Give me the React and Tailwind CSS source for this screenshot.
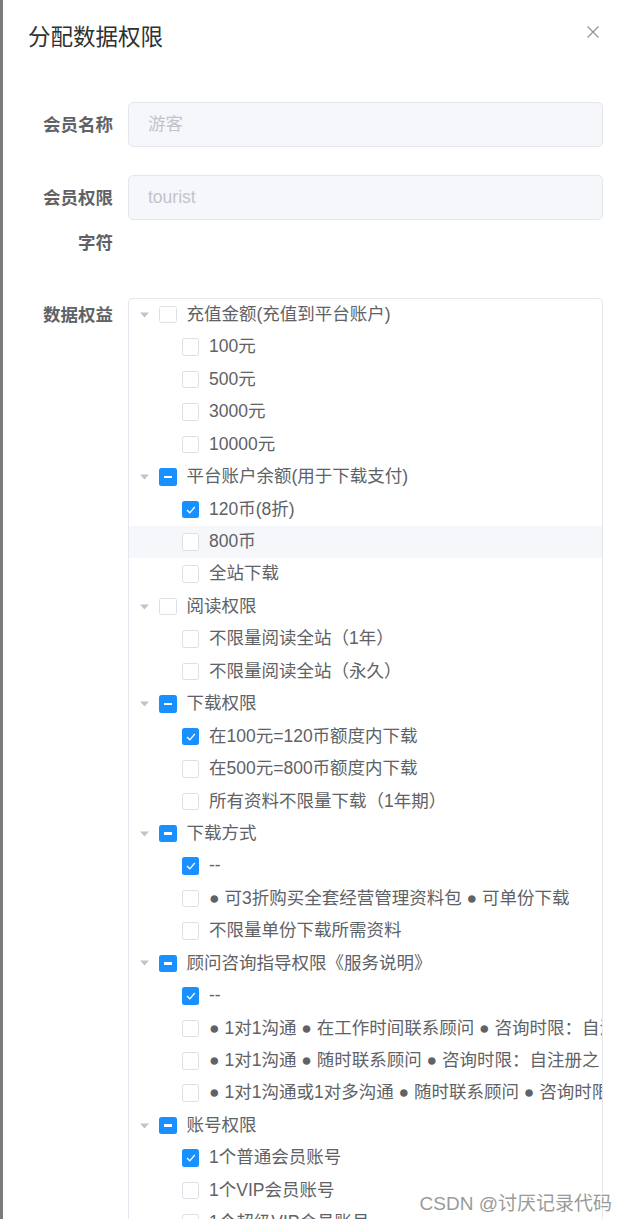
import React from 'react';

const font = { fontFamily: '"Liberation Sans", "Noto Sans CJK SC", sans-serif' };

// state: 0 = unchecked, 1 = checked, 2 = indeterminate
const tree = [
  {
    label: '充值金额(充值到平台账户)',
    state: 0,
    children: [
      { label: '100元', state: 0 },
      { label: '500元', state: 0 },
      { label: '3000元', state: 0 },
      { label: '10000元', state: 0 },
    ],
  },
  {
    label: '平台账户余额(用于下载支付)',
    state: 2,
    children: [
      { label: '120币(8折)', state: 1 },
      { label: '800币', state: 0, hover: true },
      { label: '全站下载', state: 0 },
    ],
  },
  {
    label: '阅读权限',
    state: 0,
    children: [
      { label: '不限量阅读全站（1年）', state: 0 },
      { label: '不限量阅读全站（永久）', state: 0 },
    ],
  },
  {
    label: '下载权限',
    state: 2,
    children: [
      { label: '在100元=120币额度内下载', state: 1 },
      { label: '在500元=800币额度内下载', state: 0 },
      { label: '所有资料不限量下载（1年期）', state: 0 },
    ],
  },
  {
    label: '下载方式',
    state: 2,
    children: [
      { label: '--', state: 1 },
      { label: '● 可3折购买全套经营管理资料包 ● 可单份下载', state: 0 },
      { label: '不限量单份下载所需资料', state: 0 },
    ],
  },
  {
    label: '顾问咨询指导权限《服务说明》',
    state: 2,
    children: [
      { label: '--', state: 1 },
      { label: '● 1对1沟通 ● 在工作时间联系顾问 ● 咨询时限：自注册之日起1年内有效', state: 0 },
      { label: '● 1对1沟通 ● 随时联系顾问 ● 咨询时限：自注册之日起1年内有效', state: 0 },
      { label: '● 1对1沟通或1对多沟通 ● 随时联系顾问 ● 咨询时限：永久有效', state: 0 },
    ],
  },
  {
    label: '账号权限',
    state: 2,
    children: [
      { label: '1个普通会员账号', state: 1 },
      { label: '1个VIP会员账号', state: 0 },
      { label: '1个超级VIP会员账号', state: 0 },
    ],
  },
];

function Checkbox({ state }) {
  if (state === 0) {
    return <span className="w-[17.5px] h-[17.5px] shrink-0 rounded-[2.5px] border border-[#dcdfe6] bg-white" />;
  }
  return (
    <span className="w-[17.5px] h-[17.5px] shrink-0 rounded-[2.5px] bg-[#1890ff] flex items-center justify-center">
      {state === 1 ? (
        <svg width="17.5" height="17.5" viewBox="0 0 17.5 17.5">
          <polyline points="5,9 7.8,11.8 12.8,6" fill="none" stroke="#fff" strokeWidth="1.3" />
        </svg>
      ) : (
        <span className="w-[8px] h-[2.5px] bg-white" />
      )}
    </span>
  );
}

function Caret({ show }) {
  return (
    <span className="w-[30px] h-full shrink-0 flex items-center justify-center">
      {show && (
        <svg width="9" height="6" viewBox="0 0 9 6">
          <polygon points="0,0.5 9,0.5 4.5,5.5" fill="#c0c4cc" />
        </svg>
      )}
    </span>
  );
}

function Row({ node, level }) {
  return (
    <div
      className={`h-[32.45px] flex items-center whitespace-nowrap ${node.hover ? 'bg-[#f5f7fa]' : ''}`}
      style={{ paddingLeft: level * 22.5 }}
    >
      <Caret show={level === 0} />
      <Checkbox state={node.state} />
      <span className="ml-[10px] text-[17.5px] text-[#606266] leading-none">{node.label}</span>
    </div>
  );
}

export default function App() {
  return (
    <div className="flex h-[1219px] overflow-hidden bg-white" style={font}>
      <div className="w-[3px] shrink-0 bg-[#7b7b7b]" />
      <div className="relative flex-1">
        <div className="pl-[25px] pt-[23px] h-[67px]">
          <h1 className="text-[22.5px] leading-[30px] text-[#303133]">分配数据权限</h1>
        </div>
        <button className="absolute right-[27px] top-[26px] w-[12px] h-[12px]">
          <svg width="12" height="12" viewBox="0 0 12 12">
            <path d="M0.5 0.5 L11.5 11.5 M11.5 0.5 L0.5 11.5" stroke="#909399" strokeWidth="1.2" />
          </svg>
        </button>

        <div className="pt-[35px]">
          <div className="flex mb-[27.5px]">
            <label className="relative top-[1px] w-[125px] pr-[15px] text-right text-[17.5px] leading-[45px] font-bold text-[#606266]">
              会员名称
            </label>
            <div className="w-[475px] h-[45px] rounded-[5px] border border-[#e4e7ed] bg-[#f5f7fa] px-[19px] flex items-center text-[17.5px] text-[#c0c4cc]">
              游客
            </div>
          </div>

          <div className="flex mb-[27.5px]">
            <label className="relative top-[1px] w-[125px] pr-[15px] text-right text-[17.5px] leading-[45px] font-bold text-[#606266]">
              会员权限
              <br />
              字符
            </label>
            <div className="w-[475px] h-[45px] rounded-[5px] border border-[#e4e7ed] bg-[#f5f7fa] px-[19px] flex items-center text-[17.5px] text-[#c0c4cc]">
              tourist
            </div>
          </div>

          <div className="flex">
            <label className="relative top-[1px] w-[125px] pr-[15px] text-right text-[17.5px] leading-[45px] font-bold text-[#606266]">
              数据权益
            </label>
            <div className="w-[475px] mt-[5.5px] rounded-t-[5px] border border-b-0 border-[#e4e7ed] overflow-hidden">
              {tree.map((group) => (
                <div key={group.label}>
                  <Row node={group} level={0} />
                  {group.children.map((child) => (
                    <Row key={child.label} node={child} level={1} />
                  ))}
                </div>
              ))}
            </div>
          </div>
        </div>

        <div className="absolute right-[14px] bottom-[6px] text-[19px] text-[#9a9a9a] leading-none [text-shadow:0_0_2px_#fff]">
          CSDN @讨厌记录代码
        </div>
      </div>
    </div>
  );
}
